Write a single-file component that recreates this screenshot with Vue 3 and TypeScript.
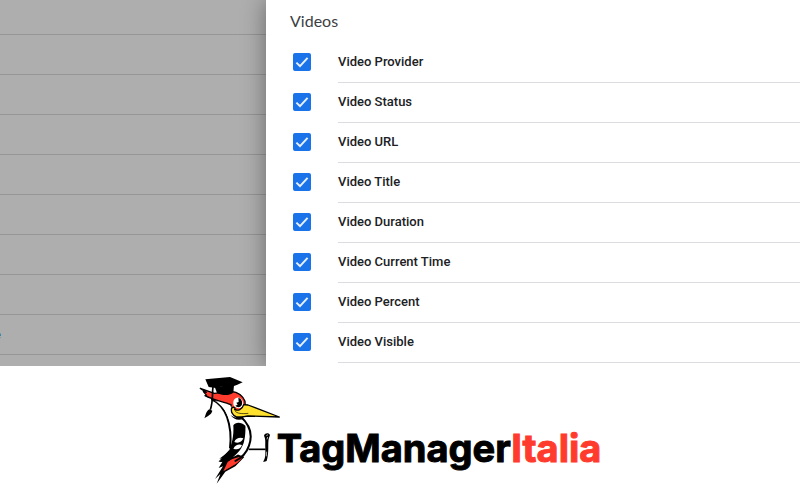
<script setup lang="ts">
import { ref } from 'vue'

interface Variable {
  id: string
  label: string
  checked: boolean
}

const variables = ref<Variable[]>([
  { id: 'provider', label: 'Video Provider', checked: true },
  { id: 'status', label: 'Video Status', checked: true },
  { id: 'url', label: 'Video URL', checked: true },
  { id: 'title', label: 'Video Title', checked: true },
  { id: 'duration', label: 'Video Duration', checked: true },
  { id: 'current-time', label: 'Video Current Time', checked: true },
  { id: 'percent', label: 'Video Percent', checked: true },
  { id: 'visible', label: 'Video Visible', checked: true },
])

const backdropRows: string[] = ['', '', '', '', '', '', '', '', 'e', '']
</script>

<template>
  <div class="page">
    <main class="workspace">
      <div class="backdrop">
        <div v-for="(text, i) in backdropRows" :key="i" class="backdrop-row">
          <a v-if="text" href="#" class="backdrop-link">{{ text }}</a>
        </div>
      </div>
      <section class="panel">
        <h2 class="heading">Videos</h2>
        <ul class="list">
          <li v-for="item in variables" :key="item.id" class="item">
            <span class="tick">
              <input :id="item.id" v-model="item.checked" type="checkbox" class="box" />
              <svg class="mark" viewBox="0 0 18 18" aria-hidden="true">
                <path d="M3.4 9.6 7 13.1 14.6 4.9" fill="none" stroke="#e8f0fe" stroke-width="2" />
              </svg>
            </span>
            <label :for="item.id" class="label">{{ item.label }}</label>
          </li>
        </ul>
      </section>
    </main>

    <footer class="brand">
      <svg class="bird" viewBox="30 3 234 387" aria-hidden="true">
        <!-- back and body -->
        <path d="M70 98C92 112 106 128 116 156C126 186 128 216 124 254L140 274L180 258C188 226 184 192 160 166L130 148L118 98Z" fill="#fff" />
        <path d="M67 102C91 113 105 131 114 156C124 184 127 216 123 250" fill="none" stroke="#000" stroke-width="6" />
        <!-- tail -->
        <path d="M120 256 88 290 105 283 89 309 102 304 78 342 94 327 83 356 109 320 139 304 166 276 130 262Z" fill="#000" />
        <path d="M117 289C132 280 148 277 162 274C152 294 131 302 103 319C108 308 113 298 117 289Z" fill="#ff3b2d" />
        <!-- wing -->
        <path d="M133 181C139 170 158 171 169 182C172 203 169 227 163 244C155 261 140 275 117 290L89 291L104 279L91 281L119 260C128 239 135 214 133 181Z" fill="#000" />
        <path d="M170 188C179 206 178 231 168 249C158 263 145 271 132 276C148 264 160 248 165 230C169 212 170 200 170 188Z" fill="#fff" />
        <path d="M154 154C183 180 191 212 180 242C173 263 157 280 137 289" fill="none" stroke="#000" stroke-width="6" />
        <path d="M136 231C140 220 153 216 163 220C159 231 148 236 136 231ZM133 251C139 240 149 236 159 240C154 252 145 256 133 251Z" fill="#fff" />
        <!-- head -->
        <path d="M34 70 52 82 43 80 53 91 48 92C75 106 102 109 126 119L128 146C140 162 156 160 170 151L168 109C160 88 145 81 126 79L76 85Z" fill="#ff3b2d" stroke="#000" stroke-width="4" stroke-linejoin="round" />
        <path d="M77 107C98 112 112 121 128 125L127 143 150 169 131 174 121 166C112 137 98 119 77 107Z" fill="#fff" />
        <!-- eye -->
        <path d="M135 124C128 108 138 96 150 98C160 101 166 114 160 126C151 132 142 130 135 124Z" fill="#fff" />
        <path d="M148 99C158 100 162 112 158 121C153 129 143 127 139 122L146 119 142 113 149 111Z" fill="#000" />
        <!-- beak -->
        <path d="M164 119 177 120 271 156 177 153C160 155 151 158 141 155C130 151 125 139 128 129C134 125 140 127 137 133C146 139 160 134 164 119Z" fill="#ffe12e" stroke="#000" stroke-width="4" stroke-linejoin="round" />
        <path d="M137 137C144 146 159 147 178 145" fill="none" stroke="#000" stroke-width="2" />
        <path d="M124 149C135 164 146 167 164 162L151 158C138 160 129 153 124 149Z" fill="#000" />
        <!-- cap and tassel -->
        <path d="M77 65 84 84C101 93 121 92 133 83L135 60Z" fill="#000" />
        <path d="M49 43 123 36 161 52 145 59 133 64 99 64 81 69 59 66Z" fill="#000" />
        <path d="M72 65C69 86 73 108 64 134" fill="none" stroke="#000" stroke-width="5" />
        <path d="M61 133 70 137C68 148 56 153 46 160C51 149 51 139 61 133Z" fill="#000" />
        <!-- leg and claw -->
        <path d="M179 253H230" fill="none" stroke="#000" stroke-width="5" />
        <path d="M225 212C228 203 240 203 243 210L239 222C236 239 241 261 233 288L222 291C231 277 229 266 229 249C228 234 231 224 225 212Z" fill="#000" />
        <path d="M232 212 237 209M234 223 236 216M232 274 233 260" stroke="#fff" stroke-width="2" />
      </svg>
      <div class="wordmark">TagManager<span class="accent">Italia</span></div>
    </footer>
  </div>
</template>

<style>
body {
  margin: 0;
  background: #fff;
}
</style>

<style scoped>
.page {
  min-height: 100vh;
  display: flex;
  flex-direction: column;
  font-family: Roboto, "Liberation Sans", sans-serif;
  background: #fff;
}

.workspace {
  display: grid;
  grid-template-columns: 266px 1fr;
  align-items: stretch;
  overflow: hidden;
}

.backdrop {
  display: flex;
  flex-direction: column;
  background: #aeaeae;
}

.backdrop-row {
  flex: 0 0 40px;
  display: flex;
  align-items: center;
  box-sizing: border-box;
  border-bottom: 1px solid #969696;
}

.backdrop-row:first-child {
  flex-basis: 35px;
}

.backdrop-row:last-child {
  flex: 1 0 0;
  border-bottom: 0;
}

.backdrop-link {
  margin-left: -6px;
  font-size: 13px;
  color: #124c9c;
  text-decoration: none;
}

.panel {
  position: relative;
  padding: 11px 0 3px 24px;
  background: #fff;
  box-shadow: 0 0 22px rgba(0, 0, 0, 0.4);
}

.heading {
  margin: 0 0 12px;
  font-family: Lato, Roboto, sans-serif;
  font-size: 16px;
  font-weight: 400;
  line-height: 20px;
  color: #3c4043;
}

.list {
  margin: 0;
  padding: 0;
  list-style: none;
}

.item {
  display: flex;
  height: 40px;
  padding-left: 3px;
}

.tick {
  flex: none;
  display: grid;
  align-content: center;
  width: 45px;
  padding-bottom: 2px;
}

.box,
.mark {
  grid-area: 1 / 1;
  width: 18px;
  height: 18px;
}

.box {
  appearance: none;
  margin: 0;
  border: 2px solid #5f6368;
  border-radius: 2px;
}

.box:checked {
  border-color: #1a73e8;
  background: #1a73e8;
}

.mark {
  pointer-events: none;
}

.label {
  flex: 1;
  box-sizing: border-box;
  border-bottom: 1px solid #dadce0;
  font-size: 13px;
  font-weight: 500;
  line-height: 38px;
  color: #202124;
}

.brand {
  flex: 1;
  display: flex;
  justify-content: center;
  align-items: flex-start;
}

.bird {
  flex: none;
  width: 78px;
  height: 129px;
  overflow: visible;
}

.wordmark {
  padding-top: 58px;
  font-family: Inter, "Open Sans", sans-serif;
  font-size: 38px;
  font-weight: 700;
  line-height: 48px;
  color: #000;
  -webkit-text-stroke: 1px currentColor;
}

.accent {
  color: #ff3b2d;
}
</style>
